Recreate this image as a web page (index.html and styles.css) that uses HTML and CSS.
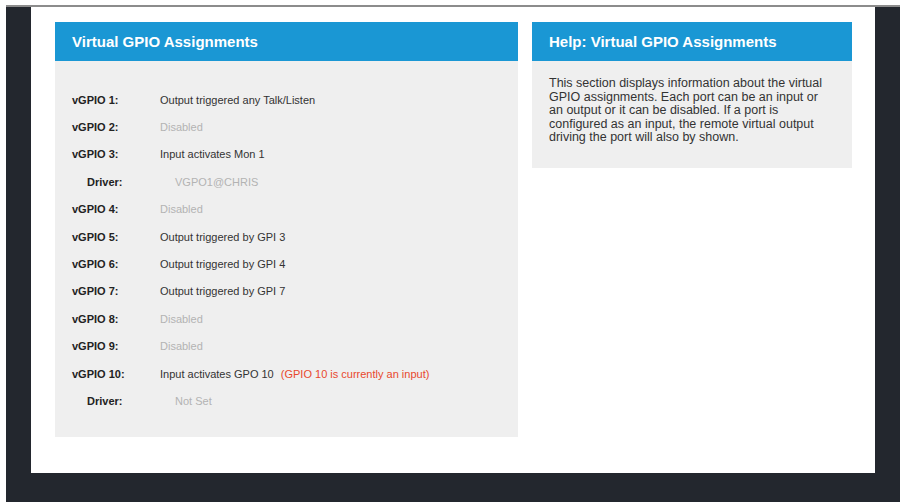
FILE: index.html
```html
<!DOCTYPE html>
<html lang="en">
<head>
  <meta charset="UTF-8" />
  <meta name="viewport" content="width=device-width, initial-scale=1.0" />
  <title>Virtual GPIO Assignments</title>
  <link rel="stylesheet" href="styles.css">
</head>
<body>
  <div class="frame">
    <main class="page">

      <section class="panel panel-main">
        <h2 class="panel-title">Virtual GPIO Assignments</h2>
        <div class="panel-body">
          <div class="row"><span class="label">vGPIO 1:</span><span class="value">Output triggered any Talk/Listen</span></div>
          <div class="row"><span class="label">vGPIO 2:</span><span class="value off">Disabled</span></div>
          <div class="row"><span class="label">vGPIO 3:</span><span class="value">Input activates Mon 1</span></div>
          <div class="row driver"><span class="label">Driver:</span><span class="value off">VGPO1@CHRIS</span></div>
          <div class="row"><span class="label">vGPIO 4:</span><span class="value off">Disabled</span></div>
          <div class="row"><span class="label">vGPIO 5:</span><span class="value">Output triggered by GPI 3</span></div>
          <div class="row"><span class="label">vGPIO 6:</span><span class="value">Output triggered by GPI 4</span></div>
          <div class="row"><span class="label">vGPIO 7:</span><span class="value">Output triggered by GPI 7</span></div>
          <div class="row"><span class="label">vGPIO 8:</span><span class="value off">Disabled</span></div>
          <div class="row"><span class="label">vGPIO 9:</span><span class="value off">Disabled</span></div>
          <div class="row"><span class="label">vGPIO 10:</span><span class="value">Input activates GPO 10 <span class="warn">(GPIO 10 is currently an input)</span></span></div>
          <div class="row driver"><span class="label">Driver:</span><span class="value off">Not Set</span></div>
        </div>
      </section>

      <section class="panel panel-help">
        <h2 class="panel-title">Help: Virtual GPIO Assignments</h2>
        <div class="panel-body">
          <p>This section displays information about the virtual<br>
            GPIO assignments. Each port can be an input or<br>
            an output or it can be disabled. If a port is<br>
            configured as an input, the remote virtual output<br>
            driving the port will also by shown.</p>
        </div>
      </section>

    </main>
  </div>
</body>
</html>
```

FILE: styles.css
```css
* {
  box-sizing: border-box;
  margin: 0;
  padding: 0;
  font-family: "Liberation Sans", Arial, sans-serif;
}

body {
  background-color: #fff;
  color: #333;
}

/* dark window border round the page */
.frame {
  margin: 5px 0 0 6px;
  width: 894px;
  height: 497px;
  background-color: #23272e;
  border-top: 2px solid #8c8c8c;
  padding: 0 25px 29px 25px;
}

.page {
  height: 100%;
  background-color: #fff;
  padding: 15px 23px 0 24px;
  display: flex;
  align-items: flex-start;
  gap: 14px;
}

.panel {
  background-color: #efefef;
}

.panel-main {
  width: 463px;
}

.panel-help {
  width: 320px;
}

.panel-title {
  height: 39px;
  line-height: 39px;
  padding-left: 17px;
  background-color: #1a97d4;
  color: #fff;
  font-size: 15px;
  font-weight: bold;
}

.panel-main .panel-body {
  padding: 25px 17px 22px 17px;
}

.row {
  display: flex;
  height: 27.4px;
  align-items: center;
  font-size: 11px;
}

.row .label {
  width: 88px;
  font-weight: bold;
  color: #222;
}

.row.driver {
  padding-left: 15px;
}

.value {
  color: #333;
}

.value.off {
  color: #b3b3b3;
}

.warn {
  color: #e8482d;
  margin-left: 4px;
}

.panel-help .panel-body {
  padding: 16px 10px 23px 17px;
  font-size: 12.5px;
  line-height: 13.5px;
  color: #333;
  white-space: nowrap;
}
```
